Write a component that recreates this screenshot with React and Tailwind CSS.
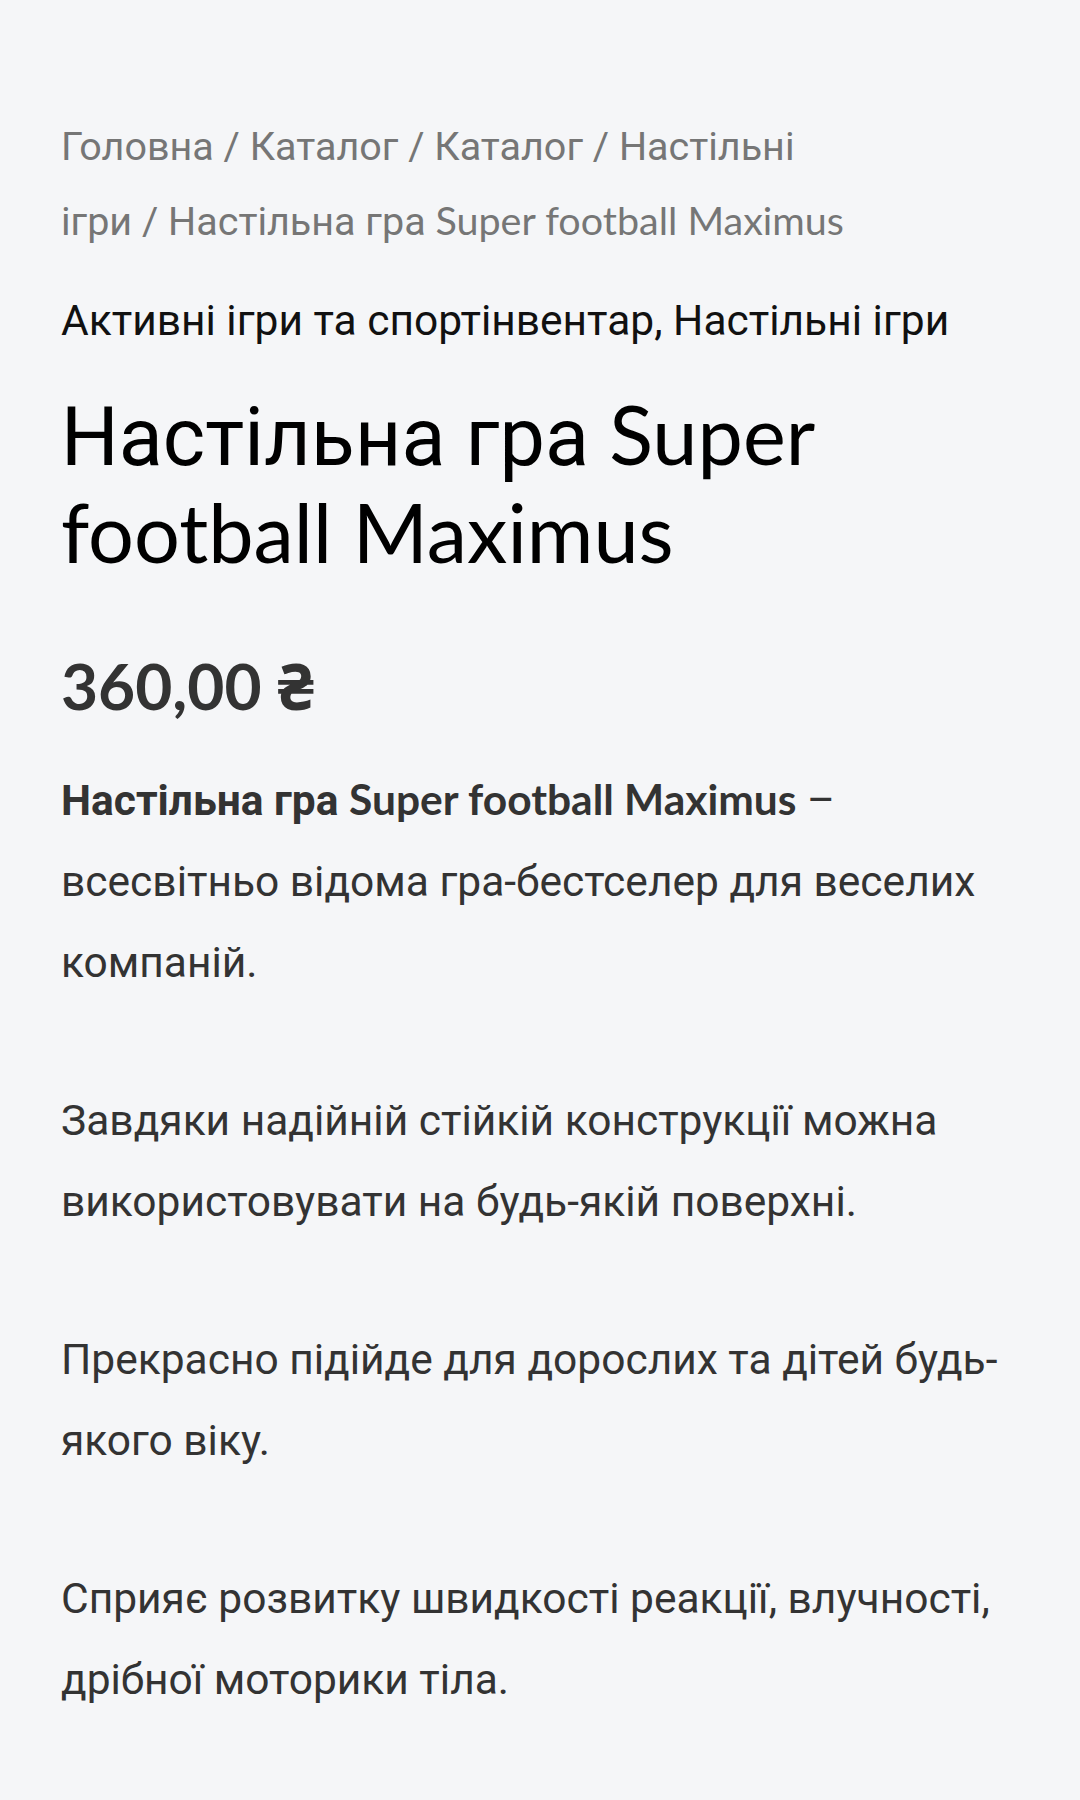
import React from 'react'

// Latin glyphs come from Lato, Cyrillic falls back to Roboto
const Lat = ({ children }) => <span className="font-['Lato']">{children}</span>

const crumbs = ['Головна', 'Каталог', 'Каталог', 'Настільні ігри']

const paragraphs = [
  'Завдяки надійній стійкій конструкції можна використовувати на будь-якій поверхні.',
  'Прекрасно підійде для дорослих та дітей будь-якого віку.',
  'Сприяє розвитку швидкості реакції, влучності, дрібної моторики тіла.',
]

export default function App() {
  return (
    <div
      className="min-h-[1800px] bg-[#f5f6f8] px-[61px] pt-[110px]"
      style={{ fontFamily: 'Roboto, "Noto Sans", sans-serif' }}
    >
      {/* breadcrumbs */}
      <nav className="max-w-[800px] text-[39.5px] leading-[73px] text-[#767676]">
        {crumbs.map((c, i) => (
          <React.Fragment key={i}>
            <a href="#">{c}</a>
            {' / '}
          </React.Fragment>
        ))}
        <span>
          Настільна гра <Lat>Super football Maximus</Lat>
        </span>
      </nav>

      <div className="mt-[38px] text-[42.5px] leading-[50px] text-[#111]">
        <a href="#">Активні ігри та спортінвентар</a>, <a href="#">Настільні ігри</a>
      </div>

      <h1 className="mt-[41px] text-[81px] leading-[94px] font-normal text-black">
        Настільна гра <Lat>Super football Maximus</Lat>
      </h1>

      <p className="mt-[68px] text-[64px] leading-[70px] font-bold text-[#333]">
        <Lat>360,00</Lat> ₴
      </p>

      <div className="mt-[34px] text-[42.5px] leading-[81px] text-[#333]">
        <p className="mb-[77px]">
          <strong className="font-bold">
            Настільна гра <Lat>Super football Maximus</Lat>
          </strong>{' '}
          – всесвітньо відома гра-бестселер для веселих компаній.
        </p>
        {paragraphs.map((t, i) => (
          <p key={i} className="mb-[77px] last:mb-0">{t}</p>
        ))}
      </div>
    </div>
  )
}
